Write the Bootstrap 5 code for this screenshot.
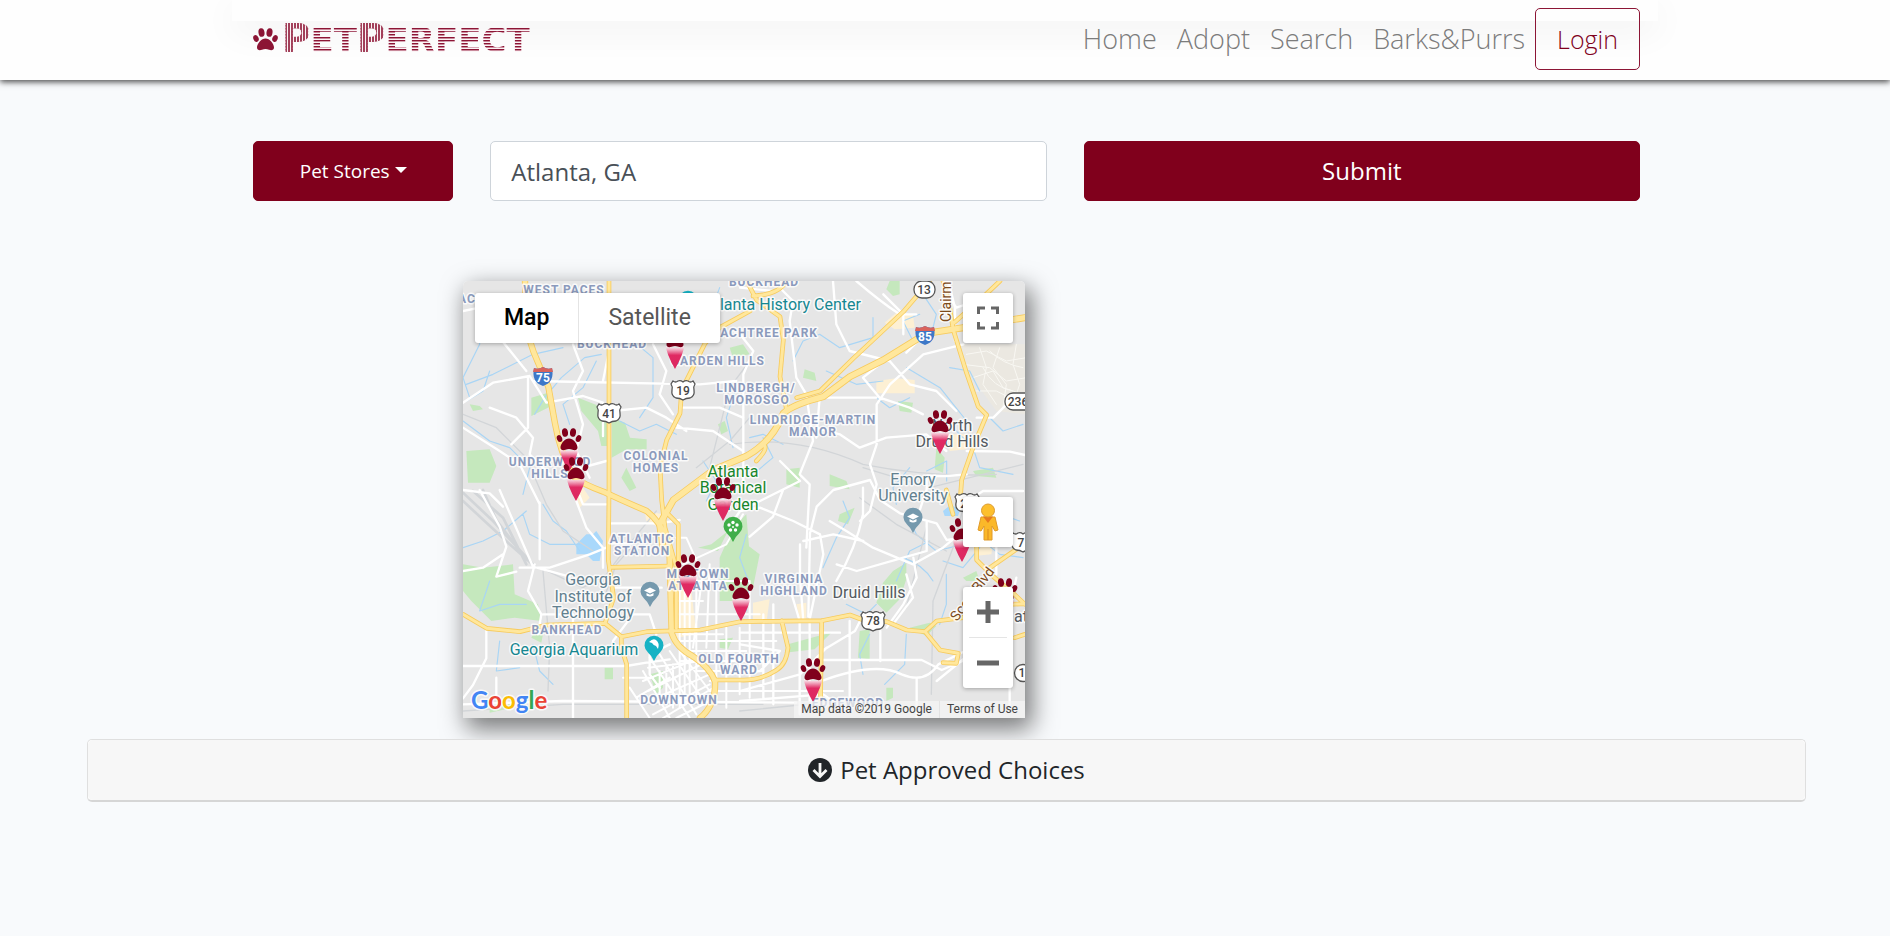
<!DOCTYPE html>
<html lang="en">
<head>
<meta charset="utf-8">
<meta name="viewport" content="width=device-width, initial-scale=1">
<title>PetPerfect</title>
<link href="https://cdn.jsdelivr.net/npm/bootstrap@5.3.0/dist/css/bootstrap.min.css" rel="stylesheet">
<style>
  :root { --wine: #80001c; --wine-soft: #8c1535; }
  body { background: #f8fafc; color: #212529; font-family: "Open Sans", "Noto Sans", sans-serif; }
  .page-width { width: 100%; max-width: 1426px; margin: 0 auto; padding: 0 18px 0 21px; }

  .site-header { position: relative; background: #fefefe; box-shadow: 0 2px 6px rgba(0,0,0,.7); min-height: 80px; }
  .header-band { position: absolute; inset: 0; overflow: hidden; pointer-events: none; }
  .header-band div { max-width: 1426px; height: 21px; margin: 0 auto; background: #fefefe; box-shadow: 0 10px 36px rgba(0,0,0,.06); }
  .site-header .navbar { position: relative; padding: 8px 0 10px; }
  .logo { font: 700 34px/40px "DejaVu Sans", sans-serif; text-decoration: none; padding: 0; color: var(--wine-soft); }
  .logo-word, .logo-word b { text-transform: uppercase; color: transparent; -webkit-background-clip: text; background-clip: text;
    background-image: repeating-linear-gradient(180deg, #8c1535 0 1px, #c98a9b 1px 2px, #fbf4f6 2px 3px); }
  .logo-word b { font-size: 39px; background-image: repeating-linear-gradient(90deg, #a2405a 0 2px, #fbf4f6 2px 3px); }
  .main-links .nav-link { font-size: 27px; line-height: 40px; font-weight: 300; color: #7c7c7c; }
  .site-header .main-links .nav-link { padding: 10px; }
  .btn-login { font-size: 25px; line-height: 38px; font-weight: 300; color: var(--wine); border: 1px solid var(--wine-soft); padding: 11px 21px; border-radius: 5px; }
  .btn-login:hover { background: var(--wine); color: #fff; }

  .search-row { --bs-gutter-x: 37px; margin-top: 61px; }
  .btn-wine { background: var(--wine); border-color: var(--wine); color: #fff; border-radius: 5px; height: 60px; }
  .btn-wine:hover { background: #66000f; color: #fff; }
  .kind-btn { font-size: 19px; }
  .kind-btn::after { border-width: 6px 6px 0; margin-left: 5px; }
  .search-row .form-control, .submit-btn { font-size: 24px; }
  .submit-btn { font-weight: 500; }
  .search-row .form-control { height: 60px; padding: 8px 20px; border-color: #ced4da; border-radius: 5px; color: #495057; }

  .map-wrap { padding-left: 210px; margin-top: 80px; }
  .map-box { position: relative; max-width: 562px; border-radius: 5px 5px 0 0; box-shadow: 5px 9px 24px 2px rgba(0,0,0,.52); font-family: Roboto, sans-serif; }
  .map-box > svg { display: block; width: 100%; height: auto; border-radius: 5px 5px 0 0; }
  .ctl { position: absolute; background: #fff; border-radius: 3px; box-shadow: 0 1px 4px rgba(0,0,0,.3); }
  .ctl button { border: 0; background: none; padding: 0; display: flex; align-items: center; justify-content: center; width: 50px; height: 50px; }
  .ctl-type { left: 12px; top: 12px; display: flex; }
  .ctl-type button { font-size: 23px; width: auto; padding: 0 29px; color: #565656; }
  .ctl-type .on { font-weight: 500; color: #000; border-right: 1px solid #e4e4e4; }
  .ctl-full { right: 12px; top: 12px; }
  .ctl-man { right: 12px; bottom: 171px; }
  .ctl-zoom { right: 12px; bottom: 30px; }
  .ctl-zoom hr { margin: 0 6px; border-color: #999; }
  .map-legal { position: absolute; right: 0; bottom: 0; height: 17px; background: rgba(245,245,245,.72); font-size: 12px; line-height: 17px; color: #444; display: flex; }
  .map-legal > * { padding: 0 7px; color: #444; text-decoration: none; }
  .map-legal > * + * { border-left: 1px solid #e3e3e3; }

  .choices { margin: 21px 84px 0 87px; border-radius: 5px; border-color: #dfdfdf; border-bottom: 2px solid #d6d6d6; position: relative; }
  .choices .card-header { background: #f7f7f7; border: 0; border-radius: 5px; padding: 0; }
  .choices button { width: 100%; height: 60px; border: 0; background: none; font-size: 24px; font-weight: 500; color: #212529; }

  .area { font: 700 12px Roboto, sans-serif; letter-spacing: 1px; fill: #8b9abc; }
  .place { font: 16px Roboto, sans-serif; }
  .halo text, .halo { paint-order: stroke; stroke: #fff; stroke-width: 3px; stroke-linejoin: round; stroke-opacity: .8; }
  .num { font: 500 12px Roboto, sans-serif; fill: #444; }
</style>
</head>
<body>
<header class="site-header">
  <div class="header-band"><div></div></div>
  <nav class="navbar navbar-expand">
    <div class="page-width d-flex align-items-center justify-content-between">
      <a class="logo d-flex align-items-center gap-1" href="#">
        <svg width="25" height="23" viewBox="0 0 25 23" fill="#8c1535" aria-hidden="true"><use href="#paw"/></svg>
        <span class="logo-word"><b>P</b>et<b>P</b>erfect</span>
      </a>
      <div class="d-flex align-items-center">
        <div class="navbar-nav main-links">
          <a class="nav-link" href="#">Home</a>
          <a class="nav-link" href="#">Adopt</a>
          <a class="nav-link" href="#">Search</a>
          <a class="nav-link" href="#">Barks&amp;Purrs</a>
        </div>
        <button type="button" class="btn btn-login">Login</button>
      </div>
    </div>
  </nav>
</header>

<main>
  <div class="page-width">
    <form class="row search-row">
      <div class="col-2 dropdown">
        <button type="button" class="btn btn-wine kind-btn dropdown-toggle w-100" data-bs-toggle="dropdown">Pet Stores</button>
      </div>
      <div class="col-5"><input class="form-control" type="text" aria-label="Location" value="Atlanta, GA"></div>
      <div class="col-5"><button type="button" class="btn btn-wine submit-btn w-100">Submit</button></div>
    </form>

    <div class="map-wrap">
      <div class="map-box">
        <svg viewBox="0 0 562 437" role="img" aria-label="Map of Atlanta">
          <defs>
            <g id="paw">
              <ellipse cx="8.5" cy="4.5" rx="3" ry="4.3" transform="rotate(-8 8.500 4.500)"/>
              <ellipse cx="16.500" cy="4.500" rx="3" ry="4.300" transform="rotate(8 16.500 4.500)"/>
              <ellipse cx="3" cy="10.500" rx="2.600" ry="3.600" transform="rotate(-22 3 10.500)"/>
              <ellipse cx="22" cy="10.500" rx="2.600" ry="3.600" transform="rotate(22 22 10.500)"/>
              <path d="M12.500 10.500c-4 0-8.500 5-8.500 9 0 3 3 3 5 2.200 2.300-.9 4.700-.9 7 0 2 .8 5 .8 5-2.200 0-4-4.500-9-8.500-9z"/>
            </g>
            <linearGradient id="tip" x1="0" y1="0" x2="0" y2="1"><stop offset="0" stop-color="#fff" stop-opacity=".9"/><stop offset=".4" stop-color="#e02a63"/><stop offset="1" stop-color="#dc2860"/></linearGradient>
            <g id="pin">
              <path d="M-9-23Q0-19 9-23Q9-16 0 0Q-9-16-9-23z" fill="url(#tip)"/>
              <g transform="translate(-12.500 -44)" fill="#80001c"><use href="#paw"/></g>
            </g>
            <path id="drop" d="M0 15Q-2 10-6 6.500A9.500 9.500 0 1 1 6 6.500Q2 10 0 15z"/>
            <path id="us" d="M-10-9q2.500 2 5 0 2.500-1 5 1 2.500-2 5-1 2.500 2 5 0l2 3q-2 3-1 6 1 6-4 8-4 0-7 2-3-2-7-2-5-2-4-8 1-3-1-6z" fill="#fff" stroke="#555" stroke-width="1.300"/>
            <g id="inter"><path d="M-9-8q4 2 9-1 5 3 9 1 3 14-9 18-12-4-9-18z" fill="#3d78c8"/><path d="M-9-8q4 2 9-1 5 3 9 1l1 4h-20z" fill="#d9635c"/></g>
          </defs>
          <rect width="562" height="437" fill="#e6e6e6"/>
          <g transform="scale(.333333)" fill="none" stroke-linejoin="round" stroke-linecap="round">
            <!-- neighbourhood blocks -->
            <path fill="#ebe8e1" d="M1480 190H1686V400L1600 390L1520 280z"/>
            <g stroke="#f8f7f2" stroke-width="3">
              <path d="M1510 220l60-10 60 30 60-10M1500 250l80 10 50 40 60-10M1530 290l60-20 30 50 60 20M1550 200l20 60-10 50 40 60M1610 200l-20 60 40 50-10 70M1660 190l-10 60 20 60-20 60M1540 330l60 0 80 40M1580 210q40 40 100 50M1560 260q30 60 90 70"/>
            </g>
            <g fill="#fdf0d4">
              <path d="M1300 95l50 5 5 40-60 5-30-20zM1240 300l60-8 55 5v40l-115 0zM1450 460l60 0 0 45-50 5zM870 965l50-10-10 70-40-5zM1530 790l60 0-5 30-50 5zM340 590l40 60-30 30-20-60zM545 690l55 10-10 40-40-20zM630 880l50 0 20 180-60 10zM1000 970l30-5v50h-20z"/>
            </g>
            <!-- parks -->
            <g fill="#c5e8bd">
              <path d="M10 510l70-5 20 50-20 50-65 0zM205 350l50-15 10 40-60 30zM345 350l50 20 40 20 0 105-20 0-10-45-50-60zM446 410l40 15 15 45 50 5v30l-60 0-45 25zM800 200l40-10 20 30-50 10zM20 370l30 5 10 10-30 5zM1280 0h30l0 40-20 5-20-20zM1025 265l30 10 5 25-40-10zM1305 360l45 5-5 30-35-5zM1420 500l25 30-5 45-25-10zM970 565l40-5 0 60-40-10zM1100 580l50 20 10 25-60-10zM1530 570l60-10 10 30-60-5zM1130 700l45-20-20 50-30-10zM0 850l60 10 90-10 5 90 70 30 10 50-80-10-70 10-60-60-25-30zM770 830l40-90 40-40 10 120-10 110-40 30-40 0zM705 800l40-10 50-40-30 60zM1290 870l40-25 0 50-20 60-40 40-30-30 20-60zM850 790l40 30-20 100-40 30zM1190 1050l30-5v90l-35-5zM975 1090l90-25 40-10-50 50-90 10zM1340 1040l60-15 20 10-30 30zM1500 890l40-20 10 30-40 0zM425 1160h25v35h-25zM770 1075l40-5-15 35-25-5zM560 1180l40-10 0 50-20 20zM600 1215l-20 30zM210 1060l30 0-5 25-30-15zM80 1280l50-20 20 20-70 15zM1270 1220l20 0 0 30-20 10zM490 560l30 60-20 10-25-40zM765 430l20-10 10 30-20 10zM1610 1150l30 10-20 30-20-10z"/>
            </g>
            <!-- water -->
            <path fill="#a9d8fb" d="M340 790l30-30 20 0 10-10 20 30-10 60-20 0-20-20-30 0zM1440 690l25-20 25 20-5 15-40 0z"/>
            <g stroke="#a9d5f5" stroke-width="3.500">
              <path d="M60 90l-10 60 0 40 -30 60-20 40 20 60M10 310l80-30 120-60 90-20M230 130l60 10 50-40 60 10M80 270l-20 60-50 30M215 400l30-50 50-60 70-60 50-10M400 240l-40 80-60 50 20 60M0 420l80 60 60 20 60 60-20 80M470 420l60 30 50-20 60 30M240 670l30 50 40 30 40 60M180 700l20 60 60 30 90 0M0 800l60-20 60-30 70-60M80 900l-30 90 60-20 80 0M110 1080l-10 90 70-10M210 1090l20 80 40 40M470 90l40 90 60 50 0 120-40 60M770 20l-30 80 60 60M820 320l-30 90 20 90M720 540l40 60-30 60"/>
              <path d="M990 240l30-60 50-20 60 40 100-30 0-60M1400 180l20-80-40-60M1090 270l90 40 80-10M1320 210l30-30-30-60 50-20M1331 260l100 60 40 50 40 50M1391 570l60-30 0 60M1240 350l40 30 60-30M900 470l30 60-60 50M1340 560l-50 60 10 50M1080 860l40-90 40-60-20-50M1300 900l40-90 60-30M1440 840l60 20 50-60M1220 1060l-30 60 10 60M1330 1060l-5 90-60 60M1450 880l0 90-20 60M1550 660l60 40 60 20M1510 740l100 80 70 10M850 760l-20 70 30 80-10 80M1150 970l60 30 30-30M1460 260l60 10 30 60M1560 390l60 60 60-20M1330 700l30 60 60 50 80-20M1470 440l60 60 20 60 100 20M1320 830q60 20 90 70M860 470l40-10 60 30"/>
            </g>
            <!-- railways -->
            <g stroke="#d2d5d8">
              <path stroke-width="8" d="M0 635L90 720L210 850M30 630L120 710L190 850M60 627l40 90 90 120M0 660l140 130 80 70"/>
              <path stroke-width="4" d="M0 400l100 40 90 90 30 70 30 70 50 80 90 60M230 860l130 60 70-40 60-80 90-110M700 560l100-80 60-70M800 490q200-30 400 60 200 40 400 30M860 240l-60 80-60 240M1390 740l-60 240M1500 680l-30 120-60 160-5 280M240 870l20 230-5 130M0 1290l300-20 600 0M1200 560l200 60 280-70M830 1290l300-30M1190 650l110 80 150 80M540 760l-80 90-40 110"/>
            </g>
            <!-- local streets -->
            <g stroke="#fff" stroke-width="7">
              <path d="M0 90l50-10 60 90 80 100M0 365l90-60 110-20 50 80 110-20 60 20 0 100M195 290v150l-50 50M0 440l110 70 60 40 60 120M50 627l60 110 20 60-30 90 60-15M330 190l30 80-30 60 30 100-20 80 40 80 M440 200l-20 100M210 300l500 10 110-10M450 390l100-10 60 30 60 40M660 380l110 0 70 30M430 540l-110 30 40 100 70 0M570 190l40 80-20 70 40 60M640 440l110 10 90 60M80 380l80 30 50 60-10 50 60 60M110 627l100 230 110 30M215 850l-20 80 40 70-10 60M170 860l90 0 120-40 50-20M230 665v170M340 660l30 80 50 60 0 60M440 727l150 0 60-10M446 787l60 0M446 920l150 0M0 870l60-10 60-40M0 627l80 10 40 40M70 1042l0 90-40 80-30 40M0 1155l40 0 450 0 60-10 70-10M0 1270l300-10 700 5M330 1000v311M240 1000l80 0M450 1080l60-80 50 0 20 60M100 1190l0 60M620 1090l-60 30 0 60 30 40"/>
              <path d="M831 160l40 50-30 70 0 330M930 0l60 60-10 60 20 170 30 50 20 140-40 100 30 30-10 190M831 20l100 10M1110 0l10 130 40 80 120 30 60 70 80 20 60 60M1180 0q70 60 130 100l50 0M1321 160l0-60-60-60M1390 155l-60 60M1250 250l-50 40 50 60 90 30 40 20M1501 190l-120 30-100 90-40 60 0 120-20 60 20 60-20 80-30 30M1060 440l70 20 60 40 80-30 120-10 60 50M970 380l80-30 130 0M1240 350l-170 0-10 120M1451 585l-60 0 0 40-20 60M1451 585l60-5M1511 510l130 2 45 10M1541 410l50 0 60-60 35-10M1221 597l-110 30-50 50-20 80-5 250M951 540l60 60-180 90-40 60M1221 597l30 60 60 40 110 30 30 50 80-10M1391 720l0 90-70 20-140 40-60-20M1100 720l50 30 80 50 120 50 90-50 60-50M960 627l-30 80-70 60M831 690l60-10 100 40 80 40 10 60-40 190M1021 780l90-20 90 20M1011 790l0 100 10 130M1351 830l10 60-40 80-50 70M1330 880l20 70-60 80M1120 900q60-100 80-200l0-80M1076 1110l100-60 20-40M831 1055l300 0M1076 1137l300 0 60 30 70-30M1076 1200q160-60 240-20 70 30 110-30l80-40M1160 1020v270M1252 1050v90M1361 1190v120M901 1000v250M831 1090l120 20-60 60-100 10M831 1230l180-50 80-80M1040 1020v240M931 970v300M980 920l30 100 0 280M831 1260l250-20 70 50M1531 1030l0 80-110 90M1660 890l-20 90 0 300M1500 670l60-40 120 0M1440 20l40 60 60-20M1600 760l0 120M1456 0l20 80 0 100"/>
            </g>
            <!-- downtown grid -->
            <g stroke="#fff" stroke-width="6">
              <path d="M650 730v550M665 900v370M680 880v390M700 890v350M720 870l-30 230M740 850l-10 250M760 900v350M790 1040v240M830 1040v200M860 900v350M640 900h220M640 960h80M640 1000h250M640 1080h300M650 1110h200M650 1140h250M700 1170h200M660 1060h120M740 1230h400M740 1200h90M660 850l130-60 50-90M640 770l30 0 40 90"/>
              <path d="M555 1160l160-20M540 1200l170-70M555 1230l180-90M560 1260l180-80M570 1300l170-90M600 1311l150-90M640 1311l120-60M520 1250l100-60M560 1130l120 180M590 1120l110 180M620 1110l110 160M650 1110l90 120M540 1170l80 140M500 1220l60 91M590 1170v100M610 1160v110M630 1150v130M480 1190l90 0"/>
            </g>
            <!-- highways: casing, then fill -->
            <g stroke="#f7cb5e" stroke-width="14">
              <path stroke-width="19" d="M186 0L190 120Q195 180 226 247L256 317L276 427Q290 510 331 587Q360 610 421 632Q480 660 551 690Q590 720 616 780L620 830L626 1057Q640 1100 691 1127Q740 1160 756 1200Q760 1270 711 1311"/>
              <path stroke-width="21" d="M600 800L590 730L631 657L751 567L851 525Q930 480 961 397Q990 370 1081 347L1161 287L1261 237L1391 157L1501 140L1686 110"/>
              <path d="M438 0V640L436 837L452 950L426 1027L475 1067V1100L491 1150V1311M1001 350L1071 330L1171 232L1321 92L1400 0M851 0L881 57L951 107L961 177L951 287L971 387M861 90L770 140L726 187L681 277L656 327L651 397L611 477L591 557L596 657L606 740M970 0Q950 40 870 45M1440 0L1456 57L1471 147L1511 277L1546 377L1571 402L1531 497L1496 597L1490 680M1611 0L1551 57L1471 127M831 1022L1076 1019L1161 1002L1201 1017L1271 1022L1331 1047L1386 1052L1421 1020L1500 1010L1560 960M1386 1052L1431 1107L1486 1117L1480 1147L1440 1145M1076 1019L1072 1290M956 1019L975 1100Q970 1150 941 1167Q890 1200 831 1197H751M0 1000L71 1042L171 1052L251 1032L426 1027M475 1067L551 1052L711 1047L831 1022M446 859L621 855M606 690L646 730V880M606 740L640 860V1040M1541 797V837L1591 887L1651 937L1686 970M1571 867L1686 787M1630 930L1640 970L1686 968M1655 1070L1686 1060M1450 627L1470 700M880 540Q920 500 900 490"/>
            </g>
            <g stroke="#ffe79c" stroke-width="9">
              <path stroke-width="14" d="M186 0L190 120Q195 180 226 247L256 317L276 427Q290 510 331 587Q360 610 421 632Q480 660 551 690Q590 720 616 780L620 830L626 1057Q640 1100 691 1127Q740 1160 756 1200Q760 1270 711 1311"/>
              <path stroke-width="16" d="M600 800L590 730L631 657L751 567L851 525Q930 480 961 397Q990 370 1081 347L1161 287L1261 237L1391 157L1501 140L1686 110"/>
              <path d="M438 0V640L436 837L452 950L426 1027L475 1067V1100L491 1150V1311M1001 350L1071 330L1171 232L1321 92L1400 0M851 0L881 57L951 107L961 177L951 287L971 387M861 90L770 140L726 187L681 277L656 327L651 397L611 477L591 557L596 657L606 740M970 0Q950 40 870 45M1440 0L1456 57L1471 147L1511 277L1546 377L1571 402L1531 497L1496 597L1490 680M1611 0L1551 57L1471 127M831 1022L1076 1019L1161 1002L1201 1017L1271 1022L1331 1047L1386 1052L1421 1020L1500 1010L1560 960M1386 1052L1431 1107L1486 1117L1480 1147L1440 1145M1076 1019L1072 1290M956 1019L975 1100Q970 1150 941 1167Q890 1200 831 1197H751M0 1000L71 1042L171 1052L251 1032L426 1027M475 1067L551 1052L711 1047L831 1022M446 859L621 855M606 690L646 730V880M606 740L640 860V1040M1541 797V837L1591 887L1651 937L1686 970M1571 867L1686 787M1630 930L1640 970L1686 968M1655 1070L1686 1060M1450 627L1470 700M880 540Q920 500 900 490"/>
            </g>
          </g>

          <g class="area halo" text-anchor="middle">
            <text x="4" y="22">AC</text><text x="101" y="13">WEST PACES</text><text x="149" y="67">BUCKHEAD</text><text x="301" y="5">BUCKHEAD</text>
            <text x="355" y="56" text-anchor="end">PEACHTREE PARK</text><text x="302" y="84" text-anchor="end">GARDEN HILLS</text>
            <text x="293" y="111">LINDBERGH/</text><text x="294" y="123">MOROSGO</text>
            <text x="350" y="143">LINDRIDGE-MARTIN</text><text x="350" y="155">MANOR</text>
            <text x="193" y="179">COLONIAL</text><text x="193" y="191">HOMES</text>
            <text x="87" y="185">UNDERWOOD</text><text x="87" y="197">HILLS</text>
            <text x="179" y="262">ATLANTIC</text><text x="179" y="274">STATION</text>
            <text x="235" y="297">MIDTOWN</text><text x="235" y="309">ATLANTA</text>
            <text x="331" y="302">VIRGINIA</text><text x="331" y="314">HIGHLAND</text>
            <text x="104" y="353">BANKHEAD</text><text x="276" y="382">OLD FOURTH</text><text x="276" y="393">WARD</text>
            <text x="216" y="423">DOWNTOWN</text><text x="385" y="426">EDGEWOOD</text>
          </g>
          <g class="place halo" text-anchor="middle">
            <g fill="#17862b"><text x="270" y="196">Atlanta</text><text x="270" y="212">Botanical</text><text x="270" y="229">Garden</text></g>
            <g fill="#168791"><text x="398" y="29" text-anchor="end">Atlanta History Center</text><text x="111" y="374">Georgia Aquarium</text></g>
            <g fill="#54595f"><text x="489" y="150">North</text><text x="489" y="166">Druid Hills</text><text x="406" y="317">Druid Hills</text><text x="551" y="341" text-anchor="start">atur</text></g>
            <g fill="#62808f"><text x="450" y="204">Emory</text><text x="450" y="220">University</text><text x="130" y="304">Georgia</text><text x="130" y="321">Institute of</text><text x="130" y="337">Technology</text></g>
            <g fill="#7c4a1c" text-anchor="start" font-size="14"><text transform="translate(488 41) rotate(-90)">Clairmont</text><text transform="translate(494 341) rotate(-53)">Scott Blvd</text></g>
          </g>

          <g class="num" text-anchor="middle">
            <use href="#us" x="146" y="132"/><text x="146" y="137">41</text>
            <use href="#us" x="220" y="109"/><text x="220" y="114">19</text>
            <use href="#us" x="410" y="340"/><text x="410" y="344">78</text>
            <use href="#us" x="504" y="222"/><text x="504" y="227">23</text>
            <use href="#us" x="560" y="261"/><text x="558" y="266">7</text>
            <g fill="#fff" stroke="#555" stroke-width="1.300"><rect x="451" y="0" width="21" height="17" rx="8"/><rect x="542" y="112" width="30" height="17" rx="8"/><circle cx="560" cy="392" r="8.500"/></g>
            <text x="461" y="13">13</text><text x="555" y="125">236</text><text x="559" y="396">1</text>
            <use href="#inter" x="80" y="95"/><use href="#inter" x="462" y="54"/>
            <g fill="#fff" font-weight="700"><text x="80" y="101">75</text><text x="462" y="60">85</text></g>
          </g>

          <use href="#drop" x="270" y="246" fill="#3fae49"/>
          <g fill="#fff"><circle cx="270" cy="241.500" r="1.700"/><circle cx="266" cy="244" r="1.700"/><circle cx="274" cy="244" r="1.700"/><circle cx="267.500" cy="249" r="1.700"/><circle cx="272.500" cy="249" r="1.700"/><circle cx="270" cy="246" r="1"/></g>
          <use href="#drop" x="187" y="311" fill="#7599ad"/><path d="M181 309.500l6-3 6 3-6 3zM183.500 312v2.500q3.500 2 7 0V312l-3.500 1.700z" fill="#fff"/>
          <use href="#drop" x="450" y="237" fill="#7599ad"/><path d="M444 235.500l6-3 6 3-6 3zM446.500 238v2.500q3.500 2 7 0V238l-3.500 1.700z" fill="#fff"/>
          <use href="#drop" x="191" y="365" fill="#16b2c4"/><path d="M186 361q4-4 7-2 4 3 2 9l-2-3q-2 0-4-3z" fill="#fff"/>
          <use href="#drop" x="225" y="20" fill="#16b2c4"/>

          <use href="#pin" x="212" y="88"/><use href="#pin" x="106" y="191"/><use href="#pin" x="113" y="220"/><use href="#pin" x="477" y="173"/>
          <use href="#pin" x="260" y="240"/><use href="#pin" x="225" y="317"/><use href="#pin" x="278" y="340"/><use href="#pin" x="350" y="421"/>
          <use href="#pin" x="499" y="281"/><use href="#pin" x="542" y="341"/>

          <text class="halo" x="8" y="428" font-family="Lato" font-size="24" font-weight="700"><tspan fill="#4285f4">G</tspan><tspan fill="#ea4335">o</tspan><tspan fill="#fbbc05">o</tspan><tspan fill="#4285f4">g</tspan><tspan fill="#34a853">l</tspan><tspan fill="#ea4335">e</tspan></text>
        </svg>

        <div class="ctl ctl-type"><button type="button" class="on">Map</button><button type="button">Satellite</button></div>
        <div class="ctl ctl-full"><button type="button" aria-label="Full screen"><svg width="22" height="24" viewBox="0 0 22 24" fill="none" stroke="#666" stroke-width="3"><path d="M1.500 8V2H8M14 2h6.500v6M20.500 16v6H14M8 22H1.500v-6"/></svg></button></div>
        <div class="ctl ctl-man"><button type="button" aria-label="Street view"><svg width="22" height="38" viewBox="0 0 22 38"><path d="M4 14h14l3 13-3 1-3-5v14H7V23l-3 5-3-1z" fill="#fbb829" stroke="#e09a2a" stroke-width="1"/><path d="M11 26v11" stroke="#d98b20"/><path d="M6 13.500h10L11 20z" fill="#e8791e"/><circle cx="11" cy="7.500" r="6.500" fill="#fdbf2d" stroke="#dd9c31"/></svg></button></div>
        <div class="ctl ctl-zoom"><button type="button" aria-label="Zoom in"><svg width="22" height="22" stroke="#666" stroke-width="5"><path d="M0 11h22M11 0v22"/></svg></button><hr><button type="button" aria-label="Zoom out"><svg width="22" height="22" stroke="#666" stroke-width="5"><path d="M0 11h22"/></svg></button></div>
        <div class="map-legal"><span>Map data ©2019 Google</span><a href="#">Terms of Use</a></div>
      </div>
    </div>
  </div>

  <section class="card choices">
    <div class="card-header">
      <button type="button" class="d-flex align-items-center justify-content-center gap-2">
        <svg width="24" height="24" viewBox="0 0 24 24" aria-hidden="true"><circle cx="12" cy="12" r="12" fill="#212529"/><path d="M12 5v13M5.500 12l6.500 6.500 6.500-6.500" fill="none" stroke="#f7f7f7" stroke-width="2.800"/></svg>
        Pet Approved Choices
      </button>
    </div>
  </section>
</main>
<script src="https://cdn.jsdelivr.net/npm/bootstrap@5.3.0/dist/js/bootstrap.bundle.min.js"></script>
</body>
</html>
